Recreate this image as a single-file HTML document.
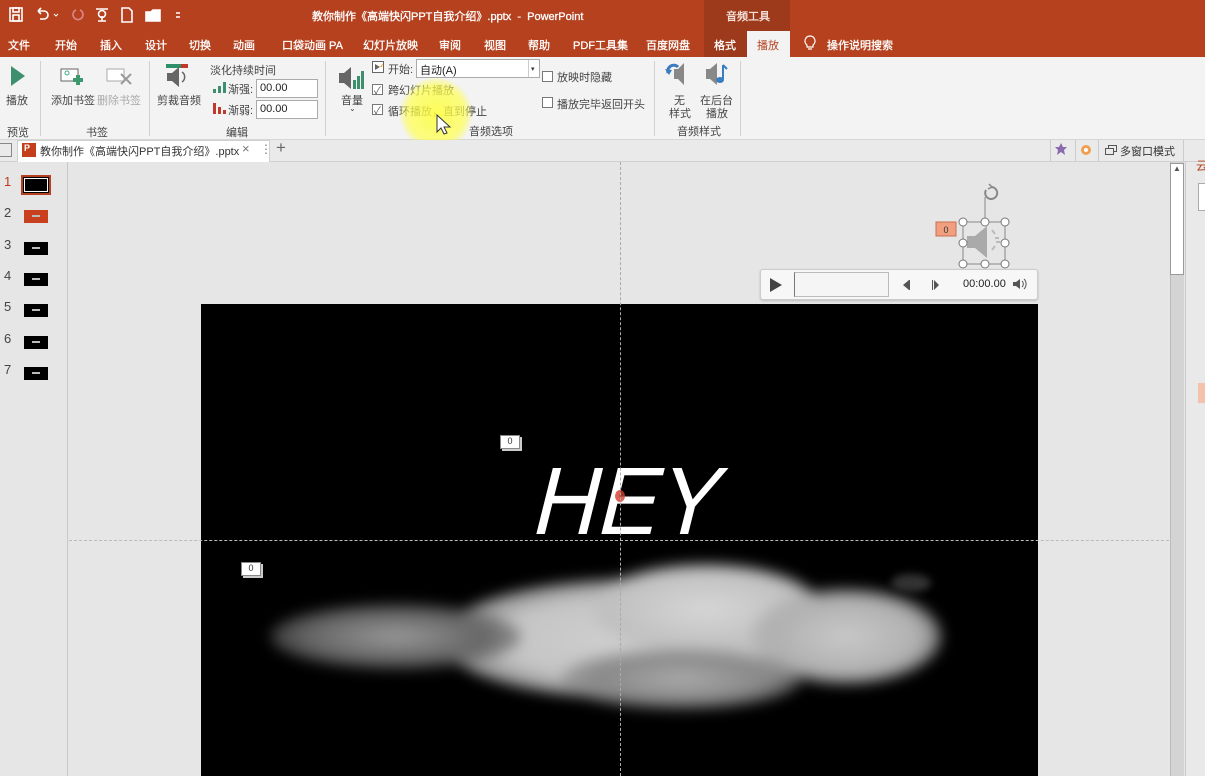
<!DOCTYPE html>
<html><head><meta charset="utf-8"><style>
*{margin:0;padding:0;box-sizing:border-box}
body{width:1205px;height:776px;overflow:hidden;background:#e6e6e6;font-family:"Liberation Sans","Noto Sans CJK SC",sans-serif;font-size:11px;color:#333;position:relative}
.a{position:absolute;white-space:nowrap}
#title{left:0;top:0;width:1205px;height:57px;background:#b5411f}
.w{color:#ffffff;font-size:11px;z-index:5;-webkit-text-stroke:0.3px #fff}
#ribbon{left:0;top:57px;width:1205px;height:83px;background:#f3f3f3;border-bottom:1px solid #d6d6d6}
.sep{position:absolute;top:4px;width:1px;height:75px;background:#d0d0d0}
.lbl{color:#444;font-size:11px}
.cb{position:absolute;width:11px;height:11px;border:1px solid #777;background:#fff}
.inp{position:absolute;height:19px;background:#fff;border:1px solid #aaa;font-size:11px;padding:2px 3px;color:#222}
#tabbar{left:0;top:140px;width:1205px;height:22px;background:#eaeaea;border-bottom:1px solid #d0d0d0}
.num{position:absolute;left:4px;font-size:13px;color:#444}
.th{position:absolute;left:24px;width:24px;height:13px;background:#000}
.th::after{content:"";position:absolute;left:8px;top:5px;width:8px;height:2px;background:#bbb}
</style></head><body>
<div class="a" id="title"></div>
<div class="a" style="left:704px;top:0;width:86px;height:57px;background:#9e3a1c"></div>
<svg class="a" style="left:8px;top:6px;z-index:5" width="180" height="18" viewBox="0 0 180 18" fill="none" stroke="#fff" stroke-width="1.6">
<rect x="2" y="2" width="12" height="13"/><rect x="5" y="2" width="6" height="4"/><rect x="5" y="9" width="6" height="6"/>
<path d="M30 5 h6 a4 4 0 0 1 0 8 h-4 M30 5 l3 -3 M30 5 l3 3"/>
<path d="M46 8 l2 2 l2 -2" stroke-width="1"/>
<path d="M68 4 a5 5 0 1 0 4 0" stroke="#d88" />
<path d="M88 3 h12 M90 15 h8 M94 10 v5"/><circle cx="94" cy="8" r="3.5"/>
<path d="M114 2 h7 l3 3 v11 h-10z"/>
<path d="M138 6 h5 l2 -2 h7 v11 h-14z" fill="#fff"/>
<path d="M168 7 h4 M168 11 h4"/>
</svg>
<div class="a w" style="left:312px;top:8px">教你制作《高端快闪PPT自我介绍》.pptx &nbsp;- &nbsp;PowerPoint</div>
<div class="a w" style="left:726px;top:8px;color:#f0d0c0">音频工具</div>
<div class="a w" style="left:8px;top:37px">文件</div>
<div class="a w" style="left:55px;top:37px">开始</div>
<div class="a w" style="left:100px;top:37px">插入</div>
<div class="a w" style="left:145px;top:37px">设计</div>
<div class="a w" style="left:189px;top:37px">切换</div>
<div class="a w" style="left:233px;top:37px">动画</div>
<div class="a w" style="left:282px;top:37px">口袋动画 PA</div>
<div class="a w" style="left:363px;top:37px">幻灯片放映</div>
<div class="a w" style="left:439px;top:37px">审阅</div>
<div class="a w" style="left:484px;top:37px">视图</div>
<div class="a w" style="left:528px;top:37px">帮助</div>
<div class="a w" style="left:573px;top:37px">PDF工具集</div>
<div class="a w" style="left:646px;top:37px">百度网盘</div>
<div class="a w" style="left:714px;top:37px">格式</div>
<div class="a" style="left:747px;top:31px;width:43px;height:26px;background:#f3f3f3"></div>
<div class="a" style="left:757px;top:37px;color:#b5411f">播放</div>
<svg class="a" style="left:803px;top:35px" width="14" height="16" fill="none" stroke="#fff" stroke-width="1.2"><path d="M7 1 a5 5 0 0 1 3 9 v2 h-6 v-2 a5 5 0 0 1 3 -9z M5 14 h4"/></svg>
<div class="a w" style="left:827px;top:37px">操作说明搜索</div>

<div class="a" id="ribbon">
<svg class="a" style="left:10px;top:8px" width="16" height="22"><path d="M1 1 L15 11 L1 21z" fill="#3d8f6e"/></svg>
<div class="a lbl" style="left:6px;top:35px">播放</div>
<div class="a lbl" style="left:7px;top:67px">预览</div>
<div class="sep" style="left:40px"></div>
<svg class="a" style="left:58px;top:8px" width="28" height="22"><rect x="3" y="4" width="17" height="12" fill="#fff" stroke="#666"/><circle cx="9" cy="8" r="2" fill="none" stroke="#4a8"/><path d="M20 10 v10 M15 15 h10" stroke="#3d9a6e" stroke-width="4"/></svg>
<div class="a lbl" style="left:51px;top:35px">添加书签</div>
<svg class="a" style="left:106px;top:8px" width="28" height="22"><rect x="1" y="4" width="17" height="12" fill="#fff" stroke="#aaa"/><path d="M15 9 l10 10 M25 9 l-10 10" stroke="#999" stroke-width="2"/></svg>
<div class="a lbl" style="left:97px;top:35px;color:#aaa">删除书签</div>
<div class="a lbl" style="left:86px;top:67px">书签</div>
<div class="sep" style="left:149px"></div>
<svg class="a" style="left:163px;top:5px" width="28" height="28"><rect x="3" y="2" width="22" height="4" fill="#2f8f6a"/><rect x="18" y="2" width="7" height="4" fill="#c0392b"/><path d="M4 11 h5 l7 -6 v20 l-7 -6 h-5z" fill="#666"/><path d="M19 10 a6 6 0 0 1 0 10" stroke="#666" fill="none" stroke-width="1.5"/></svg>
<div class="a lbl" style="left:157px;top:35px">剪裁音频</div>
<div class="a lbl" style="left:210px;top:5px">淡化持续时间</div>
<svg class="a" style="left:213px;top:25px" width="14" height="11"><rect x="0" y="7" width="3" height="4" fill="#3d8f6e"/><rect x="5" y="4" width="3" height="7" fill="#3d8f6e"/><rect x="10" y="0" width="3" height="11" fill="#3d8f6e"/></svg>
<div class="a lbl" style="left:228px;top:24px">渐强:</div>
<div class="inp" style="left:256px;top:22px;width:62px">00.00</div>
<svg class="a" style="left:213px;top:46px" width="14" height="11"><rect x="0" y="0" width="3" height="11" fill="#c0392b"/><rect x="5" y="4" width="3" height="7" fill="#c0392b"/><rect x="10" y="7" width="3" height="4" fill="#c0392b"/></svg>
<div class="a lbl" style="left:228px;top:45px">渐弱:</div>
<div class="inp" style="left:256px;top:43px;width:62px">00.00</div>
<div class="a lbl" style="left:226px;top:67px">编辑</div>
<div class="sep" style="left:325px"></div>
<svg class="a" style="left:338px;top:8px" width="28" height="26"><path d="M1 8 h5 l7 -6 v22 l-7 -6 h-5z" fill="#666"/><rect x="15" y="15" width="3" height="9" fill="#3d8f6e"/><rect x="19" y="11" width="3" height="13" fill="#3d8f6e"/><rect x="23" y="6" width="3" height="18" fill="#3d8f6e"/></svg>
<div class="a lbl" style="left:341px;top:35px">音量</div>
<div class="a lbl" style="left:349px;top:47px;font-size:8px">⌄</div>
<svg class="a" style="left:372px;top:4px" width="12" height="12"><rect x="0.5" y="0.5" width="11" height="11" fill="#fff" stroke="#666"/><path d="M3 3 l5 3 l-5 3z" fill="#666"/><path d="M8 6 l3 -4 l-1 4z" fill="#e8a020"/></svg>
<div class="a lbl" style="left:388px;top:4px">开始:</div>
<div class="inp" style="left:416px;top:2px;width:124px">自动(A)</div>
<div class="a" style="left:528px;top:3px;width:11px;height:17px;border-left:1px solid #ccc;font-size:7px;padding:5px 2px">▾</div>
<div class="cb" style="left:372px;top:27px"></div><div class="a" style="left:374px;top:25px;font-size:10px;color:#555">✓</div>
<div class="a lbl" style="left:388px;top:25px">跨幻灯片播放</div>
<div class="cb" style="left:372px;top:47px"></div><div class="a" style="left:374px;top:45px;font-size:10px;color:#555">✓</div>
<div class="a lbl" style="left:388px;top:46px">循环播放，直到停止</div>
<div class="a lbl" style="left:469px;top:66px">音频选项</div>
<div class="cb" style="left:542px;top:14px"></div>
<div class="a lbl" style="left:557px;top:12px">放映时隐藏</div>
<div class="cb" style="left:542px;top:40px"></div>
<div class="a lbl" style="left:557px;top:39px">播放完毕返回开头</div>
<div class="sep" style="left:654px"></div>
<svg class="a" style="left:664px;top:4px" width="26" height="26"><path d="M10 8 h4 l6 -6 v22 l-6 -6 h-4z" fill="#888"/><path d="M4 12 a6 6 0 0 1 10 -6" stroke="#3b7cc0" stroke-width="3" fill="none"/><path d="M1 8 l4 6 l3 -5z" fill="#3b7cc0"/></svg>
<div class="a lbl" style="left:674px;top:35px">无</div>
<div class="a lbl" style="left:669px;top:48px">样式</div>
<svg class="a" style="left:705px;top:4px" width="26" height="26"><path d="M1 8 h4 l7 -6 v22 l-7 -6 h-4z" fill="#888"/><path d="M18 4 v14" stroke="#3b7cc0" stroke-width="2"/><ellipse cx="15" cy="19" rx="4" ry="3" fill="#3b7cc0"/><path d="M18 4 l4 4" stroke="#3b7cc0" stroke-width="2"/></svg>
<div class="a lbl" style="left:700px;top:35px">在后台</div>
<div class="a lbl" style="left:706px;top:48px">播放</div>
<div class="a lbl" style="left:677px;top:66px">音频样式</div>
<div class="sep" style="left:740px"></div>
</div>
<div class="a" style="left:400px;top:78px;width:72px;height:72px;border-radius:50%;background:radial-gradient(circle,rgba(255,255,60,.85) 0%,rgba(255,255,80,.7) 55%,rgba(255,255,120,0) 75%)"></div>
<svg class="a" style="left:436px;top:114px" width="16" height="22"><path d="M1 1 v17 l4 -4 l3 6 l3 -1 l-3 -6 h6z" fill="#fff" stroke="#333" stroke-width="1"/></svg>

<div class="a" id="tabbar"></div>
<div class="a" style="left:0;top:143px;width:12px;height:14px;border:1px solid #888;border-left:none"></div>
<div class="a" style="left:17px;top:140px;width:253px;height:22px;background:#fff;border:1px solid #d0d0d0;border-bottom:none"></div>
<div class="a" style="left:22px;top:143px;width:14px;height:14px;background:#c43e1c;color:#fff;font-size:9px;font-weight:bold;padding-left:2px">P</div>
<div class="a" style="left:40px;top:143px;font-size:11px;color:#333">教你制作《高端快闪PPT自我介绍》.pptx</div>
<div class="a" style="left:242px;top:141px;font-size:13px;color:#777">×</div>
<div class="a" style="left:260px;top:142px;font-size:12px;color:#777">⋮</div>
<div class="a" style="left:276px;top:138px;font-size:17px;color:#666">+</div>
<div class="a" style="left:1050px;top:140px;width:1px;height:22px;background:#ccc"></div>
<svg class="a" style="left:1054px;top:142px" width="14" height="14"><path d="M7 1 l2 4 l4 0 l-3 3 l1 5 l-4 -3 l-4 3 l1 -5 l-3 -3 l4 0z" fill="#8a6bb0"/></svg>
<div class="a" style="left:1075px;top:140px;width:1px;height:22px;background:#ccc"></div>
<svg class="a" style="left:1079px;top:143px" width="14" height="14"><circle cx="7" cy="7" r="5" fill="#f0a050"/><circle cx="7" cy="7" r="2" fill="#fff"/></svg>
<div class="a" style="left:1098px;top:140px;width:1px;height:22px;background:#ccc"></div>
<svg class="a" style="left:1104px;top:144px" width="14" height="12" fill="none" stroke="#555"><rect x="1.5" y="4.5" width="8" height="6"/><path d="M4.5 4.5 v-3 h8 v6 h-3"/></svg>
<div class="a" style="left:1120px;top:143px;font-size:11px">多窗口模式</div>
<div class="a" style="left:1183px;top:140px;width:1px;height:22px;background:#ccc"></div>

<div class="a" style="left:0;top:162px;width:68px;height:614px;background:#e6e6e6;border-right:1px solid #c8c8c8"></div>
<div class="num" style="top:174px;color:#c0391c">1</div>
<div class="a" style="left:21px;top:175px;width:30px;height:20px;border:2px solid #b5411f;background:#000;outline:1px solid #fff;outline-offset:-4px"></div>
<div class="num" style="top:205px">2</div><div class="th" style="top:210px;background:#c8401e"></div>
<div class="num" style="top:237px">3</div><div class="th" style="top:242px"></div>
<div class="num" style="top:268px">4</div><div class="th" style="top:273px"></div>
<div class="num" style="top:299px">5</div><div class="th" style="top:304px"></div>
<div class="num" style="top:331px">6</div><div class="th" style="top:336px"></div>
<div class="num" style="top:362px">7</div><div class="th" style="top:367px"></div>

<div class="a" style="left:1170px;top:162px;width:14px;height:614px;background:#d4d4d4;border-left:1px solid #bbb"></div>
<div class="a" style="left:1170px;top:163px;width:14px;height:112px;background:#fff;border:1px solid #999"></div>
<div class="a" style="left:1173px;top:164px;font-size:8px;color:#555">▲</div>
<div class="a" style="left:1185px;top:162px;width:20px;height:614px;background:#e9e9e9;border-left:1px solid #ccc"></div>
<div class="a" style="left:1196px;top:157px;font-size:12px;color:#b5411f">云</div>
<div class="a" style="left:1198px;top:183px;width:10px;height:28px;background:#fff;border:1px solid #aaa"></div>
<div class="a" style="left:1198px;top:383px;width:10px;height:20px;background:#f3c2aa"></div>

<div class="a" style="left:201px;top:304px;width:837px;height:472px;background:#000;overflow:hidden">
 <div class="a" style="left:60px;top:255px;width:680px;height:160px;filter:blur(7px)">
  <div class="a" style="left:180px;top:20px;width:390px;height:120px;border-radius:50%;background:radial-gradient(ellipse,#d0d0d0 0%,#c4c4c4 50%,rgba(170,170,170,.7) 75%,rgba(0,0,0,0) 100%)"></div>
  <div class="a" style="left:330px;top:5px;width:230px;height:90px;border-radius:50%;background:radial-gradient(ellipse,#d6d6d6 0%,#c0c0c0 60%,rgba(0,0,0,0) 100%)"></div>
  <div class="a" style="left:490px;top:30px;width:190px;height:95px;border-radius:50%;background:radial-gradient(ellipse,#c8c8c8 0%,#b0b0b0 55%,rgba(0,0,0,0) 100%)"></div>
  <div class="a" style="left:10px;top:45px;width:250px;height:65px;border-radius:50%;background:radial-gradient(ellipse,#999 0%,#666 50%,rgba(0,0,0,0) 100%)"></div>
  <div class="a" style="left:300px;top:90px;width:240px;height:60px;border-radius:50%;background:radial-gradient(ellipse,#aaa 0%,#888 50%,rgba(0,0,0,0) 100%)"></div>
 </div>
 <div class="a" style="left:690px;top:270px;width:40px;height:18px;border-radius:50%;background:#333;filter:blur(4px)"></div>
 <svg class="a" style="left:320px;top:150px" width="220" height="90"><text x="10" y="80" fill="#fff" font-family="Liberation Sans Narrow, Liberation Sans, sans-serif" font-size="96" textLength="185" lengthAdjust="spacingAndGlyphs" transform="skewX(-14) translate(18,0)" stroke="#000" stroke-width="5" paint-order="stroke">HEY</text></svg>
 <div class="a" style="left:414px;top:186px;width:10px;height:12px;border-radius:50%;background:#d04030;opacity:.8"></div>
 <div class="a" style="left:299px;top:131px;width:20px;height:14px;background:#fff;border:1px solid #888;font-size:9px;text-align:center;box-shadow:2px 2px 0 #ccc;color:#333">0</div>
 <div class="a" style="left:40px;top:258px;width:20px;height:14px;background:#fff;border:1px solid #888;font-size:9px;text-align:center;box-shadow:2px 2px 0 #ccc;color:#333">0</div>
</div>
<div class="a" style="left:620px;top:162px;width:0;height:614px;border-left:1px dashed #aaa"></div>
<div class="a" style="left:69px;top:540px;width:1100px;height:0;border-top:1px dashed #bbb"></div>

<svg class="a" style="left:930px;top:180px" width="90" height="92">
 <path d="M56 10 a6 6 0 1 0 5 -3" fill="none" stroke="#888" stroke-width="2"/><path d="M59 4 l3 3 l-4 2" fill="none" stroke="#888" stroke-width="1.5"/>
 <line x1="55" y1="17" x2="55" y2="42" stroke="#888"/>
 <rect x="33" y="42" width="42" height="42" fill="none" stroke="#888"/>
 <path d="M37 56 h8 l12 -10 v32 l-12 -10 h-8z" fill="#aaa"/>
 <path d="M62 50 l3 4 M65 58 h4 M62 70 l3 -4 M66 62 h4" stroke="#bbb" stroke-width="2"/>
 <g fill="#fff" stroke="#777"><circle cx="33" cy="42" r="4"/><circle cx="55" cy="42" r="4"/><circle cx="75" cy="42" r="4"/><circle cx="33" cy="63" r="4"/><circle cx="75" cy="63" r="4"/><circle cx="33" cy="84" r="4"/><circle cx="55" cy="84" r="4"/><circle cx="75" cy="84" r="4"/></g>
 <rect x="6" y="42" width="20" height="14" fill="#f0a080" stroke="#c87050"/><text x="16" y="53" font-size="9" text-anchor="middle" font-family="Liberation Sans" fill="#333">0</text>
</svg>
<div class="a" style="left:760px;top:269px;width:278px;height:31px;background:#f7f7f7;border:1px solid #ccc;border-radius:3px;box-shadow:0 1px 2px #bbb"></div>
<svg class="a" style="left:769px;top:277px" width="14" height="16"><path d="M1 1 L13 8 L1 15z" fill="#444"/></svg>
<div class="a" style="left:794px;top:272px;width:95px;height:25px;background:#f5f5f5;border:1px solid #bbb;border-left:1px solid #777"></div>
<svg class="a" style="left:900px;top:279px" width="40" height="12"><path d="M9 1 v10 l-6 -5z" fill="#555"/><rect x="9" y="1" width="1" height="10" fill="#555"/><rect x="32" y="1" width="1" height="10" fill="#555"/><path d="M34 1 v10 l5 -5z" fill="#555"/></svg>
<div class="a" style="left:963px;top:278px;font-size:11px;color:#222">00:00.00</div>
<svg class="a" style="left:1012px;top:278px" width="16" height="12"><path d="M1 4 h3 l4 -3 v10 l-4 -3 h-3z" fill="#555"/><path d="M10 3 a4 4 0 0 1 0 6 M12 1 a7 7 0 0 1 0 10" fill="none" stroke="#555"/></svg>
</body></html>
